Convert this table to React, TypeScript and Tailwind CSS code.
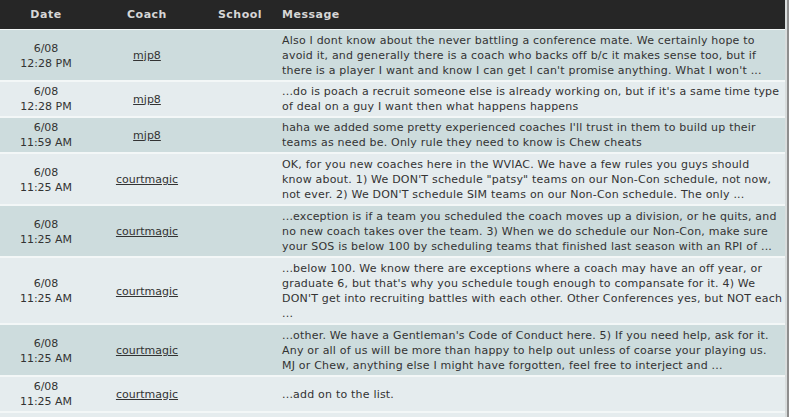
import React from "react";

interface Post {
  id: number;
  date: string;
  time: string;
  coach: string;
  lines: string[];
}

const posts: Post[] = [
  {
    id: 1,
    date: "6/08",
    time: "12:28 PM",
    coach: "mjp8",
    lines: [
      "Also I dont know about the never battling a conference mate. We certainly hope to",
      "avoid it, and generally there is a coach who backs off b/c it makes sense too, but if",
      "there is a player I want and know I can get I can't promise anything. What I won't ...",
    ],
  },
  {
    id: 2,
    date: "6/08",
    time: "12:28 PM",
    coach: "mjp8",
    lines: [
      "...do is poach a recruit someone else is already working on, but if it's a same time type",
      "of deal on a guy I want then what happens happens",
    ],
  },
  {
    id: 3,
    date: "6/08",
    time: "11:59 AM",
    coach: "mjp8",
    lines: [
      "haha we added some pretty experienced coaches I'll trust in them to build up their",
      "teams as need be. Only rule they need to know is Chew cheats",
    ],
  },
  {
    id: 4,
    date: "6/08",
    time: "11:25 AM",
    coach: "courtmagic",
    lines: [
      "OK, for you new coaches here in the WVIAC. We have a few rules you guys should",
      'know about. 1) We DON\'T schedule "patsy" teams on our Non-Con schedule, not now,',
      "not ever. 2) We DON'T schedule SIM teams on our Non-Con schedule. The only ...",
    ],
  },
  {
    id: 5,
    date: "6/08",
    time: "11:25 AM",
    coach: "courtmagic",
    lines: [
      "...exception is if a team you scheduled the coach moves up a division, or he quits, and",
      "no new coach takes over the team. 3) When we do schedule our Non-Con, make sure",
      "your SOS is below 100 by scheduling teams that finished last season with an RPI of ...",
    ],
  },
  {
    id: 6,
    date: "6/08",
    time: "11:25 AM",
    coach: "courtmagic",
    lines: [
      "...below 100. We know there are exceptions where a coach may have an off year, or",
      "graduate 6, but that's why you schedule tough enough to compansate for it. 4) We",
      "DON'T get into recruiting battles with each other. Other Conferences yes, but NOT each",
      "...",
    ],
  },
  {
    id: 7,
    date: "6/08",
    time: "11:25 AM",
    coach: "courtmagic",
    lines: [
      "...other. We have a Gentleman's Code of Conduct here. 5) If you need help, ask for it.",
      "Any or all of us will be more than happy to help out unless of coarse your playing us.",
      "MJ or Chew, anything else I might have forgotten, feel free to interject and ...",
    ],
  },
  {
    id: 8,
    date: "6/08",
    time: "11:25 AM",
    coach: "courtmagic",
    lines: ["...add on to the list."],
  },
];

export default function App() {
  return (
    <div
      className="flex w-[791px] h-[417px] overflow-hidden bg-white text-[#333] text-[11px] leading-[15px]"
      style={{ fontFamily: '"DejaVu Sans", Verdana, sans-serif' }}
    >
      <div className="w-[785px] flex flex-col gap-[2px] bg-[#f3f7f7]">
        {/* header */}
        <div className="flex h-[29px] mb-[-1px] items-center bg-[#262626] text-[#d6d6d6] font-bold tracking-[0.5px] shrink-0">
          <div className="w-[92px] text-center">Date</div>
          <div className="w-[110px] text-center">Coach</div>
          <div className="w-[76px] text-center">School</div>
          <div className="flex-1 pl-[4px]">Message</div>
        </div>

        {posts.map((p, i) => (
          <div
            key={p.id}
            className={`flex items-center shrink-0 ${
              p.lines.length > 2 ? "pt-[3px] pb-[2px]" : "py-[2px]"
            } ${i % 2 === 0 ? "bg-[#cddcdd]" : "bg-[#e5ecee]"}`}
          >
            <div className="w-[92px] text-center">
              <div>{p.date}</div>
              <div>{p.time}</div>
            </div>
            <div className="w-[110px] text-center">
              <a href="#" className="underline text-[#333]">
                {p.coach}
              </a>
            </div>
            <div className="w-[76px]" />
            <div className="flex-1 pl-[4px] tracking-[0.2px]">
              {p.lines.map((l, j) => (
                <div key={j} className="whitespace-nowrap">
                  {l}
                </div>
              ))}
            </div>
          </div>
        ))}
        <div className="h-[20px] bg-[#e5ecee] shrink-0" />
      </div>
      <div className="w-[2px] bg-[#d9dddd]" />
      <div className="w-[2px] bg-[#8e8e8e]" />
      <div className="flex-1 bg-white" />
    </div>
  );
}
